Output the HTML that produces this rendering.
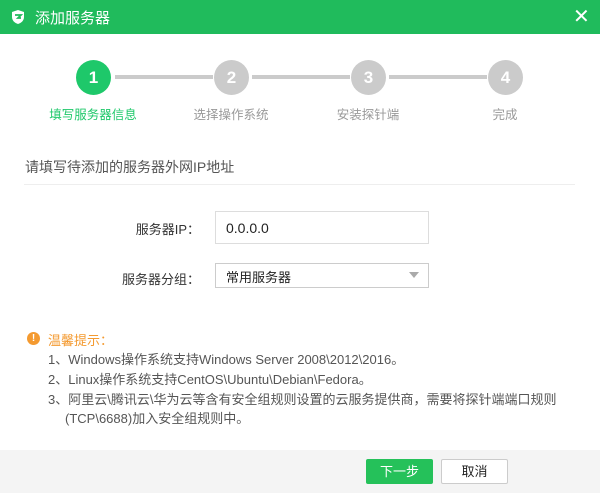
<!DOCTYPE html>
<html><head><meta charset="utf-8"><style>
*{margin:0;padding:0;box-sizing:border-box}
body{width:600px;height:493px;overflow:hidden;background:#fff;font-family:"Liberation Sans","Noto Sans CJK SC",sans-serif;position:relative;color:#333}
.a{position:absolute}
.tb{left:0;top:0;width:600px;height:34px;background:#20bb5c;color:#fff;font-size:15px}
.c{width:35px;height:35px;border-radius:50%;color:#fff;font-weight:bold;font-size:17px;text-align:center;line-height:35px;background:#cbcbcb}
.ln{height:4px;background:#cbcbcb;top:75px}
.sl{font-size:12.5px;color:#999;top:104px;width:120px;text-align:center}
.lab{font-size:13px;color:#333;text-align:right;width:110px;left:90px}
.tip{font-size:13px;color:#555;left:48px}
</style></head><body>
<div class="a tb">
<svg class="a" style="left:10px;top:9px" width="16" height="16" viewBox="0 0 16 16"><path d="M8 1L2 3v5c0 3.5 2.7 6 6 7 3.3-1 6-3.5 6-7V3z" fill="#fff"/><path d="M5 6h6l-3 3h3" stroke="#20bb5c" stroke-width="1.8" fill="none"/></svg>
<div class="a" style="left:35px;top:7px">添加服务器</div>
<div class="a" style="left:573px;top:4px;font-size:20px">✕</div>
</div>
<div class="a ln" style="left:115px;width:98px"></div>
<div class="a ln" style="left:252px;width:98px"></div>
<div class="a ln" style="left:389px;width:98px"></div>
<div class="a c" style="left:76px;top:60px;background:#1ec86a">1</div>
<div class="a c" style="left:214px;top:60px">2</div>
<div class="a c" style="left:351px;top:60px">3</div>
<div class="a c" style="left:488px;top:60px">4</div>
<div class="a sl" style="left:33px;color:#1ec86a">填写服务器信息</div>
<div class="a sl" style="left:171px">选择操作系统</div>
<div class="a sl" style="left:308px">安装探针端</div>
<div class="a sl" style="left:445px">完成</div>
<div class="a" style="left:25px;top:157px;font-size:14px;color:#555">请填写待添加的服务器外网IP地址</div>
<div class="a" style="left:24px;top:184px;width:551px;height:1px;background:#eee"></div>
<div class="a lab" style="top:219px">服务器IP：</div>
<div class="a" style="left:215px;top:211px;width:214px;height:33px;border:1px solid #ddd;font-size:14px;padding:8px 10px;color:#222">0.0.0.0</div>
<div class="a lab" style="top:269px">服务器分组：</div>
<div class="a" style="left:215px;top:263px;width:214px;height:25px;border:1px solid #ccc;font-size:13px;padding:3px 10px;color:#222">常用服务器</div>
<div class="a" style="left:409px;top:272px;width:0;height:0;border-left:5px solid transparent;border-right:5px solid transparent;border-top:6px solid #aaa"></div>
<div class="a" style="left:27px;top:332px;width:13px;height:13px;border-radius:50%;background:#f49a30;color:#fff;font-size:10px;font-weight:bold;text-align:center;line-height:13px">!</div>
<div class="a" style="left:48px;top:330px;font-size:13px;color:#f49a30">温馨提示：</div>
<div class="a tip" style="top:349px">1、Windows操作系统支持Windows Server 2008\2012\2016。</div>
<div class="a tip" style="top:369px">2、Linux操作系统支持CentOS\Ubuntu\Debian\Fedora。</div>
<div class="a tip" style="top:389px">3、阿里云\腾讯云\华为云等含有安全组规则设置的云服务提供商，需要将探针端端口规则</div>
<div class="a tip" style="top:408px;left:65px">(TCP\6688)加入安全组规则中。</div>
<div class="a" style="left:0;top:450px;width:600px;height:43px;background:#f4f4f4"></div>
<div class="a" style="left:366px;top:459px;width:67px;height:25px;background:#25c15a;border-radius:2px;color:#fff;font-size:13px;text-align:center;line-height:25px">下一步</div>
<div class="a" style="left:441px;top:459px;width:67px;height:25px;background:#fff;border:1px solid #ccc;border-radius:2px;color:#222;font-size:13px;text-align:center;line-height:23px">取消</div>
</body></html>
